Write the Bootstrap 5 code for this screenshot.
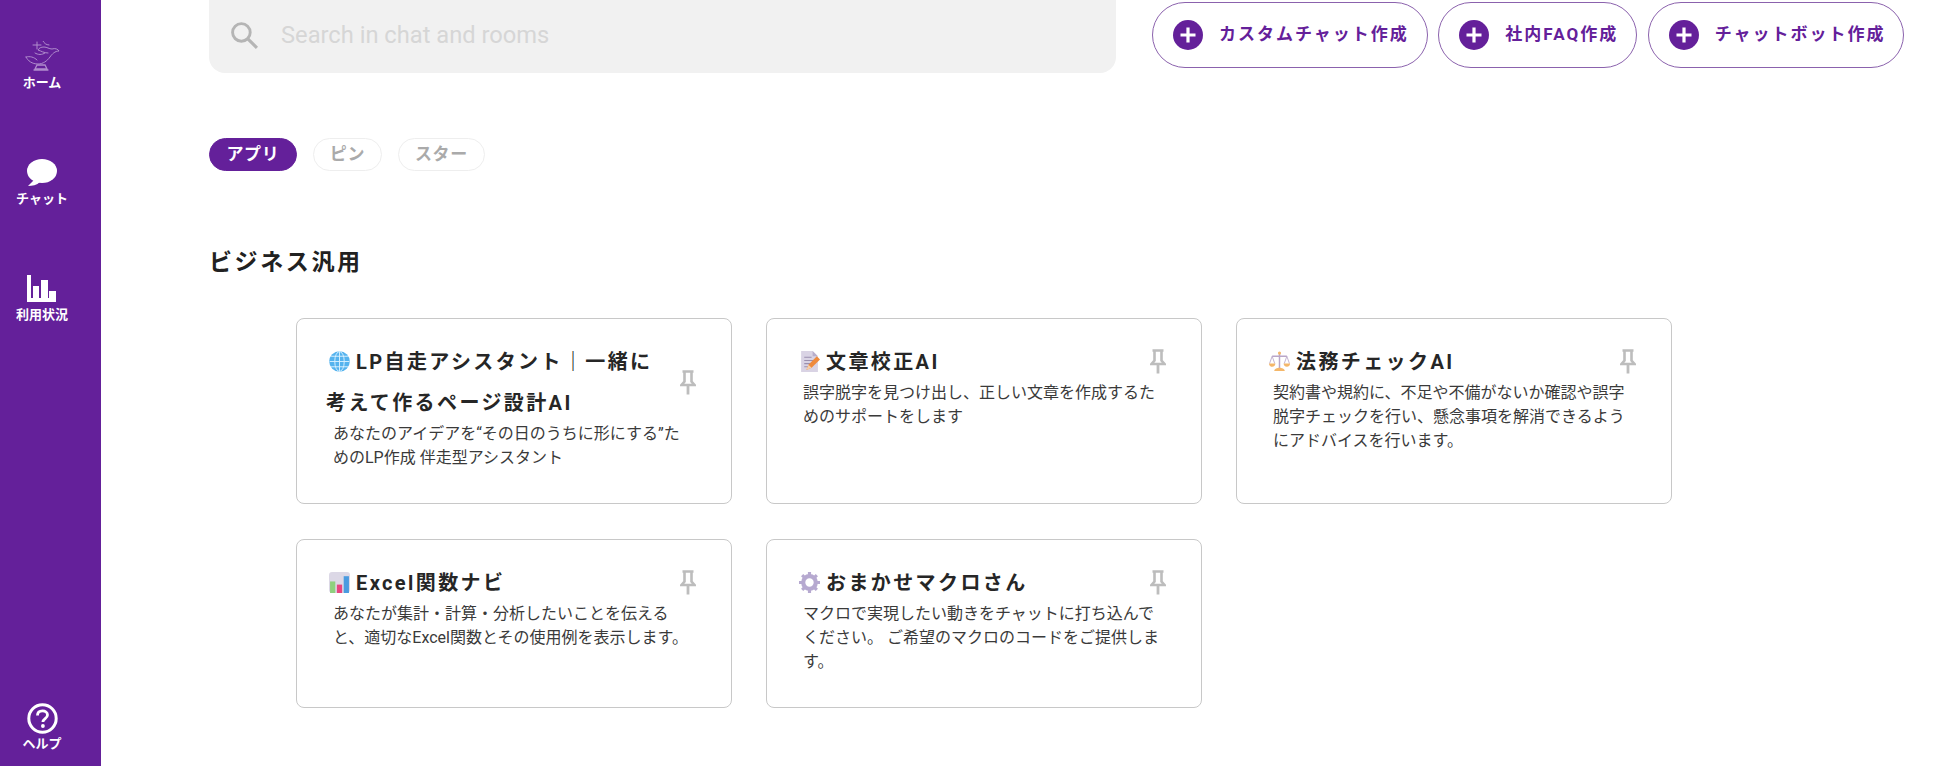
<!DOCTYPE html>
<html lang="ja">
<head>
<meta charset="utf-8">
<title>ホーム</title>
<link href="https://cdn.jsdelivr.net/npm/bootstrap@5.3.0/dist/css/bootstrap.min.css" rel="stylesheet">
<style>
html,body{height:100%;overflow:hidden;}
body{font-family:Roboto,"Noto Sans CJK JP",sans-serif;color:#212121;background:#fff;}
.side-rail{width:101px;background:#64209a;padding:41px 17px 12px 0;flex:none;height:766px;}
.side-item{color:#fff;font-size:13px;font-weight:700;line-height:20px;margin-bottom:64px;}
.side-item:last-child{margin-bottom:0;margin-top:auto;}
.side-icon{height:32px;width:40px;display:flex;align-items:center;justify-content:center;}
.main-pane{padding-left:108px;}
.top-row{padding-right:40px;}
.search-box{width:907px;height:73px;background:#f1f1f1;border-radius:0 0 16px 16px;padding:0 0 2px 21px;flex:none;margin-right:36px;}
.search-ph{font-size:23.7px;color:#d6d6d6;margin-left:22px;}
.btn-row{column-gap:10.5px;}
.make-btn{height:66px;margin-top:2px;border:1px solid #8b62ad;border-radius:33px;padding:0 18px 0 20px;color:#64209a;font-weight:700;font-size:17px;letter-spacing:2px;background:#fff;white-space:nowrap;gap:16px;}
.plus-dot{width:30px;height:30px;flex:none;}
.tab-row{margin-top:65px;gap:16px;}
.tab-pill{height:33px;border:1px solid #eee;border-radius:17px;padding:0 16px;font-size:17px;font-weight:700;letter-spacing:.6px;color:#aaa;background:#fff;display:flex;align-items:center;}
.tab-pill.is-on{background:#64209a;border-color:#64209a;color:#fff;padding:0 16.5px;}
.group-head{margin:77px 0 0;font-size:23px;font-weight:700;letter-spacing:2.6px;line-height:30px;color:#212121;}
.app-grid{margin:40px 0 0 87px;display:grid;grid-template-columns:repeat(3,436px);gap:35px 34px;}
.app-tile{border:1px solid #c8c8c8;border-radius:8px;padding:23px 35px 33px 29px;background:#fff;}
.tile-title{font-size:20px;font-weight:700;letter-spacing:2.4px;line-height:41px;color:#262626;margin:0;flex:1;min-width:0;}
.tile-emoji{width:21px;height:21px;margin:0 6px 0 3px;vertical-align:-3px;letter-spacing:0;}
.tile-pin{width:16px;height:25px;flex:none;margin:0 0 2px 20px;}
.tile-text{font-size:16px;line-height:24px;color:#3a3a3a;padding:0 0 0 7px;margin:-2px 5px 0 0;}
</style>
</head>
<body>
<div class="d-flex">
  <nav class="side-rail d-flex flex-column align-items-center">
    <div class="side-item d-flex flex-column align-items-center">
      <div class="side-icon">
        <svg width="38" height="32" viewBox="0 0 38 32" fill="none" stroke="#b08ccd" stroke-width="1" stroke-linecap="round">
          <path d="M3 16c2 4 6 7 12 7 5 0 9-3 12-7 2-3 5-6 9-6-1-2-4-3-7-2-3 0-5-2-8-2-3 0-5 1-6 3 3 1 6 3 10 3"/>
          <path d="M3 16c4-1 8 0 11 3M12 12c3 2 7 2 10 0M10 4h8M14 1v7M20 0c1 2 3 4 6 4"/>
          <path d="M14 24h8l2 4H12zM11 29h14" stroke-width="1.300"/>
        </svg>
      </div>
      <span>ホーム</span>
    </div>
    <div class="side-item d-flex flex-column align-items-center">
      <div class="side-icon">
        <svg width="32" height="30" viewBox="0 0 32 30" fill="#fff"><ellipse cx="16" cy="13" rx="15" ry="12"/><path d="M9 21 2 28c4 0 9-1 12-4z"/></svg>
      </div>
      <span>チャット</span>
    </div>
    <div class="side-item d-flex flex-column align-items-center">
      <div class="side-icon">
        <svg width="30" height="28" viewBox="0 0 30 28" fill="#fff"><path d="M0 0h4v23h2V11h6v12h2V5h7v18h1V16h7v11H0z"/></svg>
      </div>
      <span>利用状況</span>
    </div>
    <div class="side-item d-flex flex-column align-items-center">
      <div class="side-icon">
        <svg width="31" height="31" viewBox="0 0 31 31" fill="none"><circle cx="15.500" cy="15.500" r="13.700" stroke="#fff" stroke-width="3"/><path d="M10.500 12.500c0-3 2.200-4.600 5-4.600s5 1.700 5 4.200c0 3.600-4.600 3.500-4.600 7" stroke="#fff" stroke-width="2.800"/><circle cx="15.900" cy="23" r="1.900" fill="#fff"/></svg>
      </div>
      <span>ヘルプ</span>
    </div>
  </nav>
  <main class="main-pane flex-grow-1">
    <div class="top-row d-flex align-items-start">
      <div class="search-box d-flex align-items-center">
        <svg width="29" height="29" viewBox="0 0 28 28" fill="none" stroke="#b5b5b5"><circle cx="11" cy="11" r="8.500" stroke-width="2.800"/><path d="M17 17l9 9" stroke-width="3"/></svg>
        <span class="search-ph">Search in chat and rooms</span>
      </div>
      <div class="btn-row d-flex flex-nowrap">
        <div class="make-btn d-flex align-items-center"><svg class="plus-dot" viewBox="0 0 30 30"><circle cx="15" cy="15" r="15" fill="#64209a"/><path d="M15 7.500v15M7.500 15h15" stroke="#fff" stroke-width="3.200"/></svg><span>カスタムチャット作成</span></div>
        <div class="make-btn d-flex align-items-center"><svg class="plus-dot" viewBox="0 0 30 30"><circle cx="15" cy="15" r="15" fill="#64209a"/><path d="M15 7.500v15M7.500 15h15" stroke="#fff" stroke-width="3.200"/></svg><span>社内FAQ作成</span></div>
        <div class="make-btn d-flex align-items-center"><svg class="plus-dot" viewBox="0 0 30 30"><circle cx="15" cy="15" r="15" fill="#64209a"/><path d="M15 7.500v15M7.500 15h15" stroke="#fff" stroke-width="3.200"/></svg><span>チャットボット作成</span></div>
      </div>
    </div>

    <div class="tab-row d-flex">
      <div class="tab-pill is-on">アプリ</div>
      <div class="tab-pill">ピン</div>
      <div class="tab-pill">スター</div>
    </div>

    <h2 class="group-head">ビジネス汎用</h2>

    <div class="app-grid">
      <div class="app-tile">
        <div class="d-flex align-items-center">
          <h3 class="tile-title"><svg class="tile-emoji" viewBox="0 0 20 20" fill="none" stroke="#d8f0ff" stroke-width=".9"><circle cx="10" cy="10" r="9.800" fill="#55b3ee" stroke="none"/><ellipse cx="10" cy="10" rx="4.500" ry="9.500"/><path d="M10 .5v19M.5 10h19M2 5h16M2 15h16"/></svg>LP自走アシスタント｜一緒に考えて作るページ設計AI</h3>
          <svg class="tile-pin" viewBox="0 0 16 25" fill="none" stroke="#bdbdbd" stroke-width="2.600"><path d="M2.500 1.500h11M4.500 1.500v10L1.500 15h13l-3-3.500v-10"/><path d="M8 15v9.500" stroke-width="2.800"/></svg>
        </div>
        <p class="tile-text">あなたのアイデアを“その日のうちに形にする”ためのLP作成 伴走型アシスタント</p>
      </div>
      <div class="app-tile">
        <div class="d-flex align-items-center">
          <h3 class="tile-title"><svg class="tile-emoji" viewBox="0 0 20 20"><path d="M2 0h11l5 5v15H2z" fill="#d9d3e4"/><path d="M13 0l5 5h-5z" fill="#b8aecb"/><path d="M5 6h7M5 9h9M5 12h6M5 15h4" stroke="#9a8fae" stroke-width="1"/><path d="M7 18l2-5 8-8 3 3-8 8z" fill="#ef8a3c"/><path d="M7 18l2-5 3 3z" fill="#f7d0a8"/></svg>文章校正AI</h3>
          <svg class="tile-pin" viewBox="0 0 16 25" fill="none" stroke="#bdbdbd" stroke-width="2.600"><path d="M2.500 1.500h11M4.500 1.500v10L1.500 15h13l-3-3.500v-10"/><path d="M8 15v9.500" stroke-width="2.800"/></svg>
        </div>
        <p class="tile-text">誤字脱字を見つけ出し、正しい文章を作成するためのサポートをします</p>
      </div>
      <div class="app-tile">
        <div class="d-flex align-items-center">
          <h3 class="tile-title"><svg class="tile-emoji" viewBox="0 0 20 20" fill="none"><path d="M10 2v15M3 5h14" stroke="#b9a6c8" stroke-width="1.400"/><path d="M3 5 .5 12M3 5l2.500 7M17 5l-2.500 7M17 5l2.500 7" stroke="#b9a6c8" stroke-width=".8"/><path d="M0 12h6a3 3 0 0 1-6 0zM14 12h6a3 3 0 0 1-6 0z" fill="#f4b76a"/><path d="M5 19c0-2 3-3 5-3s5 1 5 3z" fill="#f4b76a"/><circle cx="10" cy="2" r="1.500" fill="#f4b76a"/></svg>法務チェックAI</h3>
          <svg class="tile-pin" viewBox="0 0 16 25" fill="none" stroke="#bdbdbd" stroke-width="2.600"><path d="M2.500 1.500h11M4.500 1.500v10L1.500 15h13l-3-3.500v-10"/><path d="M8 15v9.500" stroke-width="2.800"/></svg>
        </div>
        <p class="tile-text">契約書や規約に、不足や不備がないか確認や誤字脱字チェックを行い、懸念事項を解消できるようにアドバイスを行います。</p>
      </div>
      <div class="app-tile">
        <div class="d-flex align-items-center">
          <h3 class="tile-title"><svg class="tile-emoji" viewBox="0 0 20 20"><rect width="20" height="20" rx="3" fill="#dcd8e6"/><rect x="1" y="9" width="5" height="11" fill="#8fd07e"/><rect x="7.500" y="12" width="5" height="8" fill="#e8457f"/><rect x="14" y="4" width="5" height="16" fill="#4a9be0"/></svg>Excel関数ナビ</h3>
          <svg class="tile-pin" viewBox="0 0 16 25" fill="none" stroke="#bdbdbd" stroke-width="2.600"><path d="M2.500 1.500h11M4.500 1.500v10L1.500 15h13l-3-3.500v-10"/><path d="M8 15v9.500" stroke-width="2.800"/></svg>
        </div>
        <p class="tile-text">あなたが集計・計算・分析したいことを伝えると、適切なExcel関数とその使用例を表示します。</p>
      </div>
      <div class="app-tile">
        <div class="d-flex align-items-center">
          <h3 class="tile-title"><svg class="tile-emoji" viewBox="0 0 20 20" fill="none"><circle cx="10" cy="10" r="6" stroke="#b6a9d0" stroke-width="4"/><path d="M10 0v20M0 10h20M3 3l14 14M17 3 3 17" stroke="#b6a9d0" stroke-width="3" stroke-dasharray="3 14 3 0"/></svg>おまかせマクロさん</h3>
          <svg class="tile-pin" viewBox="0 0 16 25" fill="none" stroke="#bdbdbd" stroke-width="2.600"><path d="M2.500 1.500h11M4.500 1.500v10L1.500 15h13l-3-3.500v-10"/><path d="M8 15v9.500" stroke-width="2.800"/></svg>
        </div>
        <p class="tile-text">マクロで実現したい動きをチャットに打ち込んでください。 ご希望のマクロのコードをご提供します。</p>
      </div>
    </div>
  </main>
</div>
<script src="https://cdn.jsdelivr.net/npm/bootstrap@5.3.0/dist/js/bootstrap.bundle.min.js"></script>
</body>
</html>
